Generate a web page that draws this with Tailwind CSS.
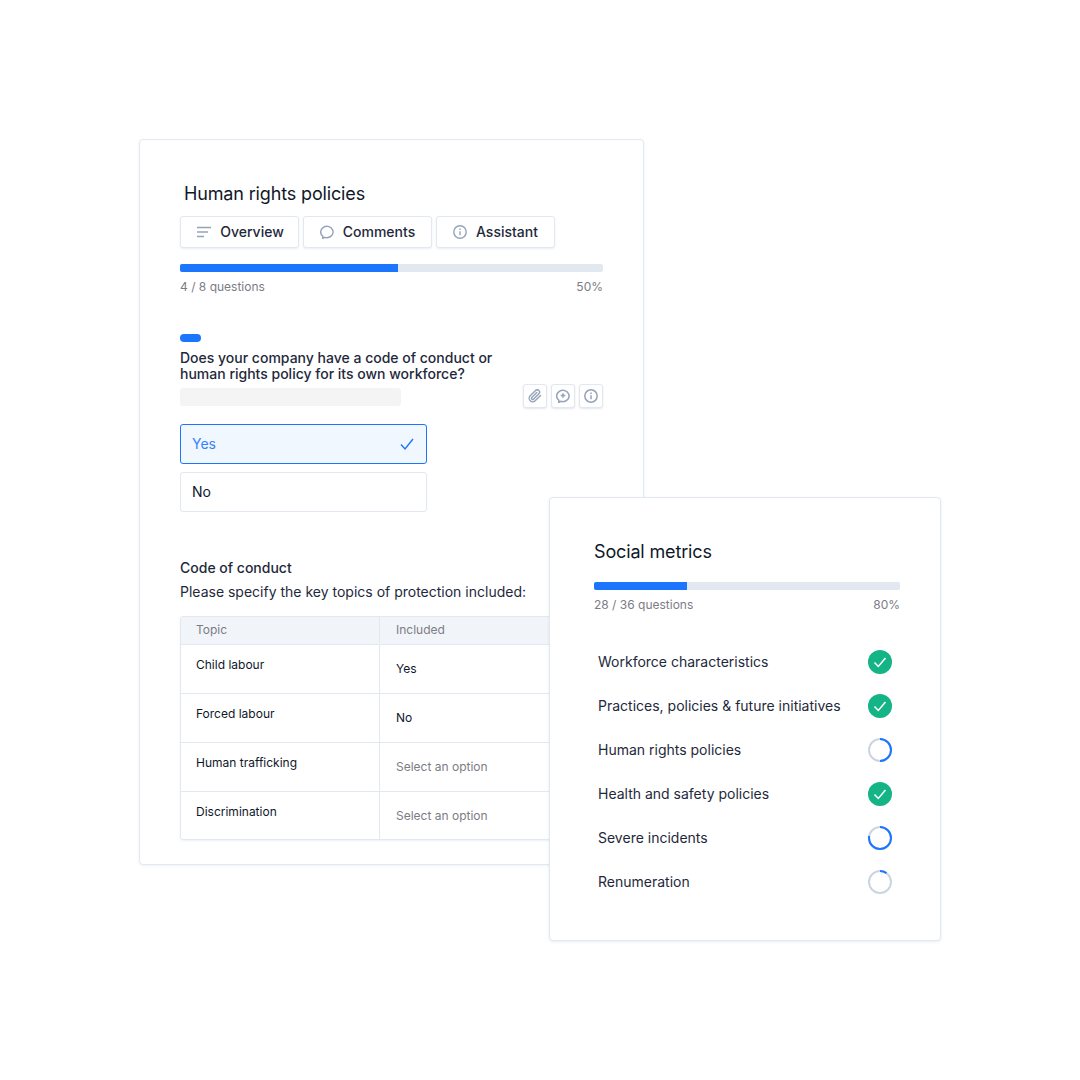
<!DOCTYPE html>
<html lang="en">
<head>
    <meta charset="UTF-8">
    <title>Human rights policies</title>
    <script src="https://cdn.jsdelivr.net/npm/@tailwindcss/browser@4"></script>
</head>
<body class="bg-white font-['Inter',sans-serif] text-[#0f172a]">
    <div class="relative w-[1080px] h-[1080px] overflow-hidden pt-[139px] pl-[139px]">

        <!-- main card -->
        <div class="w-[505px] h-[726px] bg-white border border-[#e2e8f0] rounded-[4px] shadow-[0_1px_3px_rgba(148,163,184,0.15)] pl-[40px] pr-[40px] pt-[42px]">
            <h2 class="pl-[4px] text-[18px] leading-[24px] tracking-[-0.15px]">Human rights policies</h2>

            <div class="flex gap-[4px] mt-[10px] text-[#1e293b]">
                <div class="w-[119px] h-[32px] pb-[1px] pl-[2px] flex items-center justify-center gap-[9px] bg-white border border-[#e2e8f0] rounded-[3px] shadow-[0_1px_2px_rgba(148,163,184,0.2)] text-[14px] font-medium">
                    <svg class="w-[14px] h-[14px]" viewBox="0 0 14 14" fill="none" stroke="#94a3b8" stroke-width="1.4"><path d="M0 2.5h14M0 7h11M0 11.5h7"/></svg>
                    Overview
                </div>
                <div class="w-[129px] h-[32px] pb-[1px] flex items-center justify-center gap-[9px] bg-white border border-[#e2e8f0] rounded-[3px] shadow-[0_1px_2px_rgba(148,163,184,0.2)] text-[14px] font-medium">
                    <svg class="w-[14px] h-[14px]" viewBox="0 0 14 14" fill="none" stroke="#94a3b8" stroke-width="1.4"><path d="M2.9 11.4A6.2 5.7 0 1 1 7 12.7c-.8 0-1.6-.1-2.3-.4l-2 1.2z" stroke-linejoin="round"/></svg>
                    Comments
                </div>
                <div class="w-[119px] h-[32px] pb-[1px] flex items-center justify-center gap-[9px] bg-white border border-[#e2e8f0] rounded-[3px] shadow-[0_1px_2px_rgba(148,163,184,0.2)] text-[14px] font-medium">
                    <svg class="w-[14px] h-[14px]" viewBox="0 0 14 14" fill="none" stroke="#94a3b8" stroke-width="1.4"><circle cx="7" cy="7" r="6.2"/><path d="M7 6.2v4M7 3.6v1.4"/></svg>
                    Assistant
                </div>
            </div>

            <div class="h-[8px] mt-[16px] bg-[#e2e8f0] rounded-[2px] overflow-hidden">
                <div class="h-full w-[218px] bg-[#1c75fd]"></div>
            </div>
            <div class="flex justify-between mt-[7px] text-[12px] leading-[16px] text-[#7c7c85]">
                <span>4 / 8 questions</span>
                <span>50%</span>
            </div>

            <div class="w-[21px] h-[8px] mt-[39px] bg-[#1c75fd] rounded-full"></div>
            <p class="mt-[8px] w-[340px] text-[14px] leading-[16px] font-medium text-[#1e293b]">Does your company have a code of conduct or human rights policy for its own workforce?</p>

            <div class="flex justify-between items-start">
                <div class="w-[221px] h-[18px] mt-[6px] bg-[#f4f4f5] rounded-[3px]"></div>
                <div class="flex gap-[4px] mt-[2px]">
                    <div class="w-[24px] h-[24px] flex items-center justify-center bg-white border border-[#e2e8f0] rounded-[3px] shadow-[0_1px_2px_rgba(148,163,184,0.25)]">
                        <svg class="w-[14px] h-[14px]" viewBox="0 0 24 24" fill="none" stroke="#94a3b8" stroke-width="2.4" stroke-linecap="round" stroke-linejoin="round"><path d="M21.44 11.05l-9.19 9.19a6 6 0 0 1-8.49-8.49l9.19-9.19a4 4 0 0 1 5.66 5.66l-9.2 9.19a2 2 0 0 1-2.83-2.83l8.49-8.48"/></svg>
                    </div>
                    <div class="w-[24px] h-[24px] flex items-center justify-center bg-white border border-[#e2e8f0] rounded-[3px] shadow-[0_1px_2px_rgba(148,163,184,0.25)]">
                        <svg class="w-[14px] h-[14px]" viewBox="0 0 14 14" fill="none" stroke="#94a3b8" stroke-width="1.5"><path d="M2.9 11.4A6.2 5.7 0 1 1 7 12.7c-.8 0-1.6-.1-2.3-.4l-2 1.2z" stroke-linejoin="round"/><path d="M7 4.2v4.6M4.7 6.5h4.6"/></svg>
                    </div>
                    <div class="w-[24px] h-[24px] flex items-center justify-center bg-white border border-[#e2e8f0] rounded-[3px] shadow-[0_1px_2px_rgba(148,163,184,0.25)]">
                        <svg class="w-[14px] h-[14px]" viewBox="0 0 14 14" fill="none" stroke="#94a3b8" stroke-width="1.5"><circle cx="7" cy="7" r="6.2"/><path d="M7 6.2v4M7 3.6v1.4"/></svg>
                    </div>
                </div>
            </div>

            <div class="w-[247px] h-[40px] mt-[16px] px-[11px] flex items-center justify-between bg-[#f1f7fe] border border-[#1c75fd] rounded-[3px] text-[14px] text-[#3583f8]">
                <span class="mb-[2px]">Yes</span>
                <svg class="w-[14px] h-[14px] -translate-x-[1px]" viewBox="0 0 14 14" fill="none" stroke="#1c75fd" stroke-width="1.4"><path d="M1 7.5l4 4.5 8-10"/></svg>
            </div>
            <div class="w-[247px] h-[40px] mt-[8px] px-[11px] pb-[2px] flex items-center bg-white border border-[#e2e8f0] rounded-[3px] text-[14px]">No</div>

            <p class="mt-[46px] text-[14px] leading-[20px] font-medium text-[#1e293b]">Code of conduct</p>
            <p class="mt-[4px] text-[14px] leading-[20px] whitespace-nowrap text-[#1e293b]">Please specify the key topics of protection included:</p>

            <!-- table, its right end lies under the second card -->
            <div class="mt-[14px] w-[423px] border border-[#e2e8f0] rounded-[3px] overflow-hidden shadow-[0_1px_2px_rgba(148,163,184,0.15)] text-[12px] leading-[16px]">
                <div class="grid grid-cols-[199px_1fr] h-[28px] pb-[1px] bg-[#f1f5f9] text-[#7c7c85] border-b border-[#e2e8f0]">
                    <div class="pl-[15px] flex items-center border-r border-[#e2e8f0]">Topic</div>
                    <div class="pl-[16px] flex items-center">Included</div>
                </div>
                <div class="grid grid-cols-[199px_1fr] h-[49px] border-b border-[#e2e8f0]">
                    <div class="pl-[15px] pt-[12px] border-r border-[#e2e8f0]">Child labour</div>
                    <div class="pl-[16px] pt-[16px]">Yes</div>
                </div>
                <div class="grid grid-cols-[199px_1fr] h-[49px] border-b border-[#e2e8f0]">
                    <div class="pl-[15px] pt-[12px] border-r border-[#e2e8f0]">Forced labour</div>
                    <div class="pl-[16px] pt-[16px]">No</div>
                </div>
                <div class="grid grid-cols-[199px_1fr] h-[49px] border-b border-[#e2e8f0]">
                    <div class="pl-[15px] pt-[12px] border-r border-[#e2e8f0]">Human trafficking</div>
                    <div class="pl-[16px] pt-[16px] text-[#7c7c85]">Select an option</div>
                </div>
                <div class="grid grid-cols-[199px_1fr] h-[47px]">
                    <div class="pl-[15px] pt-[12px] border-r border-[#e2e8f0]">Discrimination</div>
                    <div class="pl-[16px] pt-[16px] text-[#7c7c85]">Select an option</div>
                </div>
            </div>
        </div>

        <!-- second card, overlaps the first -->
        <div class="absolute left-[549px] top-[497px] w-[392px] h-[444px] bg-white border border-[#e2e8f0] rounded-[4px] shadow-[0_1px_3px_rgba(148,163,184,0.2)] pl-[44px] pr-[40px] pt-[42px]">
            <h2 class="text-[18px] leading-[24px] tracking-[-0.15px]">Social metrics</h2>
            <div class="h-[8px] mt-[18px] bg-[#e2e8f0] rounded-[2px] overflow-hidden">
                <div class="h-full w-[93px] bg-[#1c75fd]"></div>
            </div>
            <div class="flex justify-between mt-[7px] text-[12px] leading-[16px] text-[#7c7c85]">
                <span>28 / 36 questions</span>
                <span>80%</span>
            </div>

            <div class="mt-[37px] pl-[4px] pr-[8px] text-[14px] text-[#1e293b] flex flex-col gap-[20px]">
                <div class="h-[24px] flex items-center justify-between">
                    <span class="mb-[2px]">Workforce characteristics</span>
                    <svg class="w-[24px] h-[24px]" viewBox="0 0 24 24" fill="none"><circle cx="12" cy="12" r="12" fill="#14b486"/><path d="M6.5 12.5l3.8 4 7.2-8.5" stroke="#fff" stroke-width="1.5"/></svg>
                </div>
                <div class="h-[24px] flex items-center justify-between">
                    <span class="mb-[2px]">Practices, policies &amp; future initiatives</span>
                    <svg class="w-[24px] h-[24px]" viewBox="0 0 24 24" fill="none"><circle cx="12" cy="12" r="12" fill="#14b486"/><path d="M6.5 12.5l3.8 4 7.2-8.5" stroke="#fff" stroke-width="1.5"/></svg>
                </div>
                <div class="h-[24px] flex items-center justify-between">
                    <span class="mb-[2px]">Human rights policies</span>
                    <svg class="w-[24px] h-[24px] -rotate-90" viewBox="0 0 24 24" fill="none" stroke-width="2"><circle cx="12" cy="12" r="11" stroke="#cbd5e1"/><circle cx="12" cy="12" r="11" stroke="#1c75fd" pathLength="100" stroke-dasharray="50 100"/></svg>
                </div>
                <div class="h-[24px] flex items-center justify-between">
                    <span class="mb-[2px]">Health and safety policies</span>
                    <svg class="w-[24px] h-[24px]" viewBox="0 0 24 24" fill="none"><circle cx="12" cy="12" r="12" fill="#14b486"/><path d="M6.5 12.5l3.8 4 7.2-8.5" stroke="#fff" stroke-width="1.5"/></svg>
                </div>
                <div class="h-[24px] flex items-center justify-between">
                    <span class="mb-[2px]">Severe incidents</span>
                    <svg class="w-[24px] h-[24px] -rotate-90" viewBox="0 0 24 24" fill="none" stroke-width="2"><circle cx="12" cy="12" r="11" stroke="#cbd5e1"/><circle cx="12" cy="12" r="11" stroke="#1c75fd" pathLength="100" stroke-dasharray="78 100"/></svg>
                </div>
                <div class="h-[24px] flex items-center justify-between">
                    <span class="mb-[2px]">Renumeration</span>
                    <svg class="w-[24px] h-[24px] -rotate-90" viewBox="0 0 24 24" fill="none" stroke-width="2"><circle cx="12" cy="12" r="11" stroke="#cbd5e1"/><circle cx="12" cy="12" r="11" stroke="#1c75fd" pathLength="100" stroke-dasharray="10 100"/></svg>
                </div>
            </div>
        </div>
    </div>
</body>
</html>
